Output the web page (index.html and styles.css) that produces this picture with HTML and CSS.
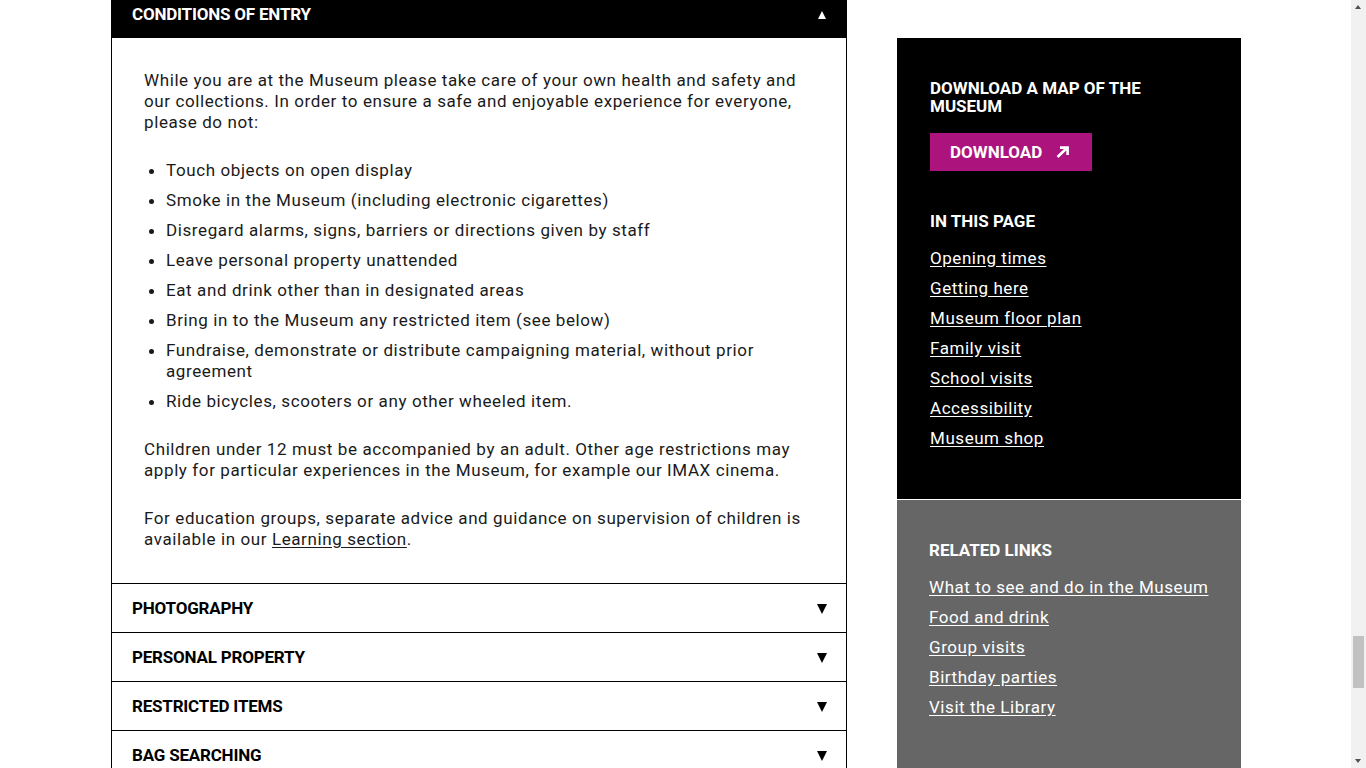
FILE: index.html
```html
<!DOCTYPE html>
<html lang="en">
<head>
<meta charset="utf-8">
<title>Visit the Museum</title>
<link rel="stylesheet" href="styles.css">
</head>
<body>
<div class="page">
  <main class="main">
    <section class="accordion">
      <div class="acc-item open">
        <div class="acc-head dark">
          <span class="acc-title">CONDITIONS OF ENTRY</span>
          <span class="tri up"></span>
        </div>
        <div class="acc-body">
          <p>While you are at the Museum please take care of your own health and safety and our collections. In order to ensure a safe and enjoyable experience for everyone, please do not:</p>
          <ul class="rules">
            <li>Touch objects on open display</li>
            <li>Smoke in the Museum (including electronic cigarettes)</li>
            <li>Disregard alarms, signs, barriers or directions given by staff</li>
            <li>Leave personal property unattended</li>
            <li>Eat and drink other than in designated areas</li>
            <li>Bring in to the Museum any restricted item (see below)</li>
            <li>Fundraise, demonstrate or distribute campaigning material, without prior agreement</li>
            <li>Ride bicycles, scooters or any other wheeled item.</li>
          </ul>
          <p>Children under 12 must be accompanied by an adult. Other age restrictions may apply for particular experiences in the Museum, for example our IMAX cinema.</p>
          <p>For education groups, separate advice and guidance on supervision of children is available in our <a href="#">Learning section</a>.</p>
        </div>
      </div>
      <div class="acc-item">
        <div class="acc-head"><span class="acc-title">PHOTOGRAPHY</span><span class="tri down"></span></div>
      </div>
      <div class="acc-item">
        <div class="acc-head"><span class="acc-title">PERSONAL PROPERTY</span><span class="tri down"></span></div>
      </div>
      <div class="acc-item">
        <div class="acc-head"><span class="acc-title">RESTRICTED ITEMS</span><span class="tri down"></span></div>
      </div>
      <div class="acc-item">
        <div class="acc-head"><span class="acc-title">BAG SEARCHING</span><span class="tri down"></span></div>
      </div>
    </section>
  </main>
  <aside class="sidebar">
    <div class="side-box black">
      <h3 class="side-title narrow">DOWNLOAD A MAP OF THE MUSEUM</h3>
      <a class="btn" href="#">DOWNLOAD
        <svg class="btn-icon" viewBox="0 0 14 12" width="14" height="12" aria-hidden="true"><path d="M1.5 11 L11 2 M4 1.6 H11.6 V9" fill="none" stroke="#fff" stroke-width="2.6"/></svg>
      </a>
      <h3 class="side-title spaced">IN THIS PAGE</h3>
      <ul class="links">
        <li><a href="#">Opening times</a></li>
        <li><a href="#">Getting here</a></li>
        <li><a href="#">Museum floor plan</a></li>
        <li><a href="#">Family visit</a></li>
        <li><a href="#">School visits</a></li>
        <li><a href="#">Accessibility</a></li>
        <li><a href="#">Museum shop</a></li>
      </ul>
    </div>
    <div class="side-box grey">
      <h3 class="side-title">RELATED LINKS</h3>
      <ul class="links">
        <li><a href="#">What to see and do in the Museum</a></li>
        <li><a href="#">Food and drink</a></li>
        <li><a href="#">Group visits</a></li>
        <li><a href="#">Birthday parties</a></li>
        <li><a href="#">Visit the Library</a></li>
      </ul>
    </div>
  </aside>
</div>
<div class="scrollbar" aria-hidden="true">
  <span class="sb-arrow sb-up"></span>
  <span class="sb-thumb"></span>
  <span class="sb-arrow sb-down"></span>
</div>
</body>
</html>
```
FILE: styles.css
```css
body {
  margin: 0;
  padding-right: 14px;
  background: #fff;
  font-family: Roboto, "Liberation Sans", sans-serif;
  color: #1a1a1a;
  overflow: hidden;
}
.page {
  width: 1130px;
  margin: 0 auto;
  display: flex;
  gap: 50px;
  align-items: flex-start;
}
.main {
  width: 736px;
  margin-top: -11px;
}
.accordion {
  border-left: 1px solid #000;
  border-right: 1px solid #000;
}
.acc-item {
  border-bottom: 1px solid #000;
}
.acc-head {
  height: 48px;
  display: flex;
  align-items: center;
  justify-content: space-between;
  padding: 0 19px 0 20px;
  font-weight: 700;
  font-size: 17px;
  letter-spacing: -0.2px;
  color: #000;
}
.acc-head.dark {
  background: #000;
  color: #fff;
  height: 49px;
  margin: 0 -1px;
  padding: 0 21px 0 21px;
}
.tri {
  width: 0;
  height: 0;
  border-left: 5px solid transparent;
  border-right: 5px solid transparent;
}
.tri.down {
  border-top: 10px solid #000;
  margin-top: 1px;
}
.tri.up {
  border-bottom: 8px solid #fff;
  border-left-width: 4.5px;
  border-right-width: 4.5px;
  margin-top: 2px;
}
.acc-body {
  padding: 32px 32px 33px 32px;
  font-size: 17px;
  line-height: 21px;
  letter-spacing: 0.6px;
}
.acc-body p {
  margin: 0 0 27px 0;
}
.acc-body p:last-child {
  margin-bottom: 0;
}
.acc-body a {
  color: inherit;
  text-decoration: underline;
  text-underline-offset: 2px;
}
.rules {
  margin: 0 0 27px 0;
  padding-left: 22px;
}
.rules li {
  margin-bottom: 9px;
}
.rules li:last-child {
  margin-bottom: 0;
}
.sidebar {
  width: 344px;
  margin-top: 38px;
}
.side-box {
  color: #fff;
}
.side-box.black {
  background: #000;
  border-bottom: 1px solid #fff;
  padding: 41px 33px 46px;
}
.side-box.grey {
  background: #666;
  padding: 41px 32px 60px;
}
.side-title {
  margin: 0;
  font-size: 17px;
  line-height: 18px;
  font-weight: 700;
}
.side-title.narrow {
  max-width: 230px;
}
.side-title.spaced {
  margin-top: 41px;
}
.btn {
  display: inline-flex;
  align-items: center;
  gap: 14px;
  margin-top: 18px;
  height: 38px;
  padding: 0 22px 0 20px;
  background: #ad137d;
  color: #fff;
  font-weight: 700;
  font-size: 17px;
  text-decoration: none;
}
.links {
  list-style: none;
  margin: 13px 0 0;
  padding: 0;
}
.links li {
  font-size: 17px;
  line-height: 30px;
  letter-spacing: 0.55px;
}
.links a {
  color: #fff;
  text-decoration: underline;
  text-underline-offset: 2px;
}
.scrollbar {
  position: fixed;
  top: 0;
  right: 0;
  width: 15px;
  height: 100%;
  background: #f1f1f1;
}
.sb-arrow {
  position: absolute;
  left: 4px;
  width: 0;
  height: 0;
  border-left: 3.5px solid transparent;
  border-right: 3.5px solid transparent;
}
.sb-up {
  top: 5px;
  border-bottom: 4px solid #505050;
}
.sb-down {
  bottom: 5px;
  border-top: 4px solid #505050;
}
.sb-thumb {
  position: absolute;
  left: 2px;
  right: 2px;
  top: 636px;
  height: 52px;
  background: #c1c1c1;
}
```
